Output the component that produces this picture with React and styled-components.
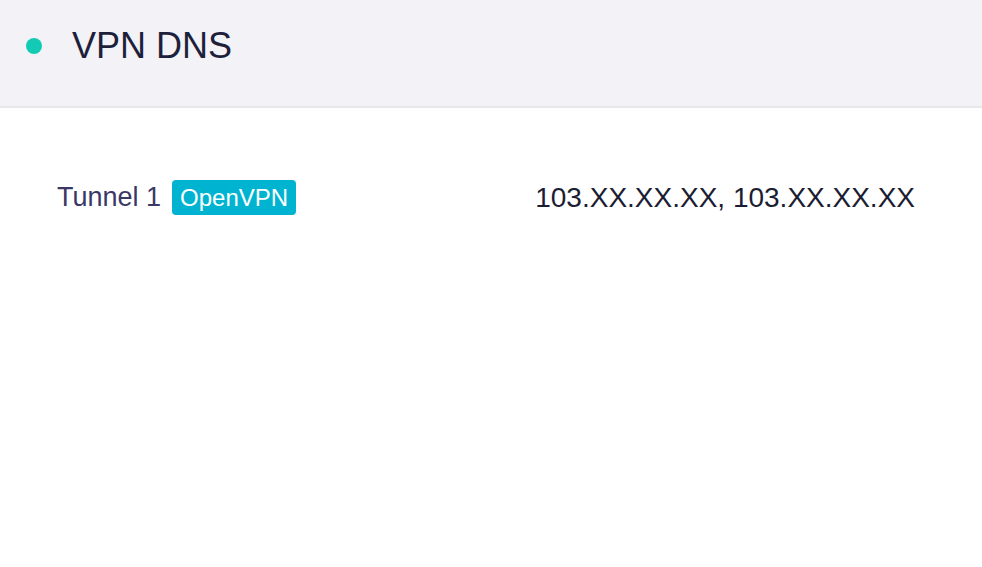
import styled, { createGlobalStyle } from 'styled-components';

const GlobalStyle = createGlobalStyle`
  body {
    margin: 0;
    background: #ffffff;
    font-family: "Liberation Sans", Arial, sans-serif;
  }
`;

const Page = styled.div`
  min-height: 567px;
  background: #ffffff;
`;

const Header = styled.header`
  display: flex;
  align-items: center;
  height: 108px;
  padding: 0 0 14px 26px;
  box-sizing: border-box;
  background-color: #f2f2f7;
  border-bottom: 2px solid #e6e6eb;
`;

const StatusDot = styled.span`
  width: 16px;
  height: 16px;
  border-radius: 50%;
  background-color: ${(p) => p.color};
  margin-right: 30px;
`;

const Title = styled.h1`
  margin: 0;
  font-size: 36px;
  font-weight: 400;
  color: #1e1f3b;
`;

const Content = styled.main`
  padding: 72px 67px 0 57px;
`;

const Row = styled.div`
  display: flex;
  align-items: center;
  justify-content: space-between;
`;

const Label = styled.div`
  display: flex;
  align-items: center;
  gap: 11px;
  font-size: 27px;
  color: #3b3868;
`;

const Badge = styled.span`
  display: inline-flex;
  align-items: center;
  height: 35px;
  padding: 0 8px;
  border-radius: 4px;
  background-color: #00b4d1;
  color: #ffffff;
  font-size: 24px;
`;

const Value = styled.div`
  font-size: 28px;
  color: #1c1d33;
`;

export default function App() {
  return (
    <Page>
      <GlobalStyle />
      <Header>
        <StatusDot color="#13cbb5" />
        <Title>VPN DNS</Title>
      </Header>
      <Content>
        <Row>
          <Label>
            Tunnel 1
            <Badge>OpenVPN</Badge>
          </Label>
          <Value>103.XX.XX.XX, 103.XX.XX.XX</Value>
        </Row>
      </Content>
    </Page>
  );
}
